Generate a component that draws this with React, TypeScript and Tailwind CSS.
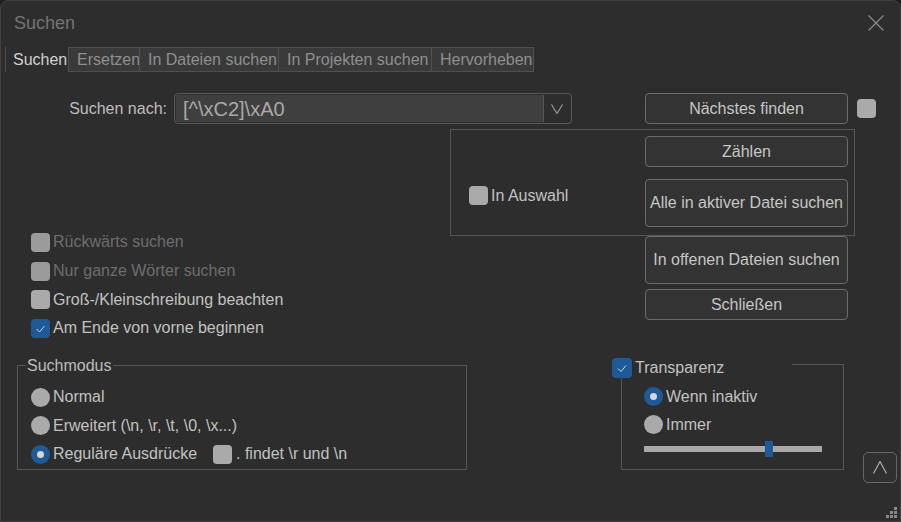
import type { ReactNode } from "react";

const FONT = "font-['Liberation_Sans',Arial,sans-serif]";

function CheckBox({ checked = false, disabled = false }: { checked?: boolean; disabled?: boolean }) {
  if (checked) {
    return (
      <span className="flex h-[19px] w-[19px] shrink-0 items-center justify-center rounded-[4px] bg-[#1e5a97]">
        <svg width="19" height="19" viewBox="0 0 19 19">
          <polyline points="5.5,10 8.5,13 13.5,7" fill="none" stroke="#c9d6e6" strokeWidth="1" />
        </svg>
      </span>
    );
  }
  return (
    <span
      className={`block h-[19px] w-[19px] shrink-0 rounded-[4px] ${
        disabled ? "bg-[#9b9b9b]" : "bg-[#aaaaaa]"
      }`}
    />
  );
}

function Radio({ checked = false }: { checked?: boolean }) {
  if (checked) {
    return (
      <span className="flex h-[19px] w-[19px] shrink-0 items-center justify-center rounded-full bg-[#1e5a97]">
        <span className="block h-[7px] w-[7px] rounded-full bg-[#d6d6d6]" />
      </span>
    );
  }
  return <span className="block h-[19px] w-[19px] shrink-0 rounded-full bg-[#aaaaaa]" />;
}

function Button({ children, tall = false, className = "" }: { children: ReactNode; tall?: boolean; className?: string }) {
  return (
    <div
      className={`flex w-[203px] shrink-0 items-center justify-center rounded-[4px] border border-[#6b6b6b] bg-[#333333] text-[#c6c6c6] ${
        tall ? "h-[48px]" : "h-[31px]"
      } ${className}`}
    >
      {children}
    </div>
  );
}

function CheckRow({ label, checked, disabled }: { label: string; checked?: boolean; disabled?: boolean }) {
  return (
    <div className="flex h-[28.7px] items-center gap-[3px]">
      <CheckBox checked={checked} disabled={disabled} />
      <span className={disabled ? "text-[#6d6d6d]" : "text-[#c2c2c2]"}>{label}</span>
    </div>
  );
}

function RadioRow({ label, checked }: { label: string; checked?: boolean }) {
  return (
    <div className="flex h-[28.5px] items-center gap-[3px]">
      <Radio checked={checked} />
      <span className="text-[#c2c2c2]">{label}</span>
    </div>
  );
}

const tabs = [
  { name: "Ersetzen", w: "w-[72px] border-l" },
  { name: "In Dateien suchen", w: "w-[139px]" },
  { name: "In Projekten suchen", w: "w-[153px]" },
  { name: "Hervorheben", w: "w-[102px]" },
];

export default function App() {
  return (
    <div className={`h-[522px] w-[901px] bg-[#1e1e1e] ${FONT} text-[16px] leading-[20px]`}>
      <div className="relative flex h-full w-full flex-col overflow-hidden rounded-t-[8px] border border-[#414141] bg-[#2d2d2d]">
        {/* title bar */}
        <div className="flex h-[43px] shrink-0 items-center justify-between pl-[13px] pr-[16px]">
          <span className="text-[18px] text-[#747474]">Suchen</span>
          <svg width="16" height="16" viewBox="0 0 16 16">
            <path d="M0.5 0.5 L15.5 15.5 M15.5 0.5 L0.5 15.5" stroke="#8b8b8b" strokeWidth="1.2" />
          </svg>
        </div>

        {/* tabs */}
        <div className="mt-[3px] flex h-[25px] shrink-0 pl-[4px]">
          <span className="block h-[25px] w-px bg-[#4d4d4d]" />
          <div className="flex w-[62px] items-center pl-[7px] text-[#d0d0d0]">Suchen</div>
          {tabs.map((t) => (
            <div
              key={t.name}
              className={`flex h-[25px] items-center overflow-hidden whitespace-nowrap border-y border-r border-[#4f4f4f] bg-[#3a3a3a] pl-[8px] text-[#8f8f8f] ${t.w}`}
            >
              {t.name}
            </div>
          ))}
        </div>

        {/* search row */}
        <div className="mt-[21px] flex h-[31px] shrink-0 items-center">
          <div className="w-[166px] text-right text-[#bdbdbd]">Suchen nach:</div>
          <div className="ml-[7px] flex h-[31px] w-[398px] rounded-[4px] border border-[#585858] p-px">
            <div className="flex flex-1 items-center bg-[#3f3f3f] pl-[7px] text-[20px] text-[#a9a9a9]">
              [^\xC2]\xA0
            </div>
            <div className="flex w-[27px] items-center justify-center border-l border-[#555555]">
              <svg width="12" height="10" viewBox="0 0 12 10">
                <polyline points="0.5,0.5 6,9.5 11.5,0.5" fill="none" stroke="#9c9c9c" strokeWidth="1.1" />
              </svg>
            </div>
          </div>
          <Button className="ml-[73px]">Nächstes finden</Button>
          <div className="ml-[9px]">
            <CheckBox />
          </div>
        </div>

        {/* options + actions */}
        <div className="mt-[5px] flex shrink-0 items-start">
          <div className="flex w-[449px] flex-col pl-[30px] pt-[99px]">
            <CheckRow label="Rückwärts suchen" disabled />
            <CheckRow label="Nur ganze Wörter suchen" disabled />
            <CheckRow label="Groß-/Kleinschreibung beachten" />
            <CheckRow label="Am Ende von vorne beginnen" checked />
          </div>
          <div className="flex w-[405px] flex-col">
            <div className="flex h-[107px] border border-[#565656]">
              <div className="flex w-[194px] items-start gap-[3px] pl-[18px] pt-[56px]">
                <CheckBox />
                <span className="text-[#c2c2c2]">In Auswahl</span>
              </div>
              <div className="flex flex-col gap-[12px] pt-[6px]">
                <Button>Zählen</Button>
                <Button tall>Alle in aktiver Datei suchen</Button>
              </div>
            </div>
            <Button tall className="ml-[195px]">In offenen Dateien suchen</Button>
            <Button className="ml-[195px] mt-[5px]">Schließen</Button>
          </div>
        </div>

        {/* search mode + transparency */}
        <div className="mt-[13px] flex shrink-0 items-start">
          <fieldset className="ml-[16px] h-[114px] w-[450px] border border-[#575757]">
            <legend className="ml-[8px] px-px text-[#bdbdbd]">Suchmodus</legend>
            <div className="flex flex-col pl-[13px] pt-[7px]">
              <RadioRow label="Normal" />
              <RadioRow label="Erweitert (\n, \r, \t, \0, \x...)" />
              <div className="flex h-[28.5px] items-center">
                <div className="flex w-[182px] items-center gap-[3px]">
                  <Radio checked />
                  <span className="text-[#c2c2c2]">Reguläre Ausdrücke</span>
                </div>
                <div className="flex items-center gap-[4px]">
                  <CheckBox />
                  <span className="text-[#c2c2c2]">. findet \r und \n</span>
                </div>
              </div>
            </div>
          </fieldset>

          <fieldset className="ml-[154px] mt-[2px] h-[112px] w-[223px] border border-[#575757]">
            <legend className="-ml-[10px] flex h-[14px] w-[180px] items-start gap-[3px] overflow-visible">
              <span className="flex h-[20px] w-[20px] shrink-0 items-center justify-center rounded-[4px] bg-[#1e5a97]">
                <svg width="20" height="20" viewBox="0 0 20 20">
                  <polyline points="6,10.5 9,13.5 14,7.5" fill="none" stroke="#c9d6e6" strokeWidth="1" />
                </svg>
              </span>
              <span className="text-[#c2c2c2]">Transparenz</span>
            </legend>
            <div className="flex flex-col pl-[22px] pt-[11px]">
              <div className="flex h-[28px] items-center gap-[3px]">
                <Radio checked />
                <span className="text-[#c2c2c2]">Wenn inaktiv</span>
              </div>
              <div className="flex h-[28px] items-center gap-[3px]">
                <Radio />
                <span className="text-[#c2c2c2]">Immer</span>
              </div>
              <div className="relative mt-[2px] flex h-[16px] w-[178px] items-center">
                <div className="h-[6px] w-full bg-[#a9a9a9]" />
                <div className="absolute left-[121px] top-0 h-[16px] w-[8px] bg-[#1e5a97]" />
              </div>
            </div>
          </fieldset>

          <div className="ml-[19px] mt-[96px] flex h-[31px] w-[34px] items-center justify-center rounded-[5px] border border-[#666666] bg-[#303030]">
            <svg width="14" height="13" viewBox="0 0 14 13">
              <polyline points="0.5,12.5 7,0.5 13.5,12.5" fill="none" stroke="#b4b4b4" strokeWidth="1.1" />
            </svg>
          </div>
        </div>

        {/* resize grip */}
        <svg className="absolute bottom-[2px] right-[2px]" width="12" height="12" viewBox="0 0 12 12">
          <rect x="8" y="0" width="3" height="3" fill="#8a8a8a" />
          <rect x="4" y="4" width="3" height="3" fill="#8a8a8a" />
          <rect x="8" y="4" width="3" height="3" fill="#8a8a8a" />
          <rect x="0" y="8" width="3" height="3" fill="#8a8a8a" />
          <rect x="4" y="8" width="3" height="3" fill="#8a8a8a" />
          <rect x="8" y="8" width="3" height="3" fill="#8a8a8a" />
        </svg>
      </div>
    </div>
  );
}
